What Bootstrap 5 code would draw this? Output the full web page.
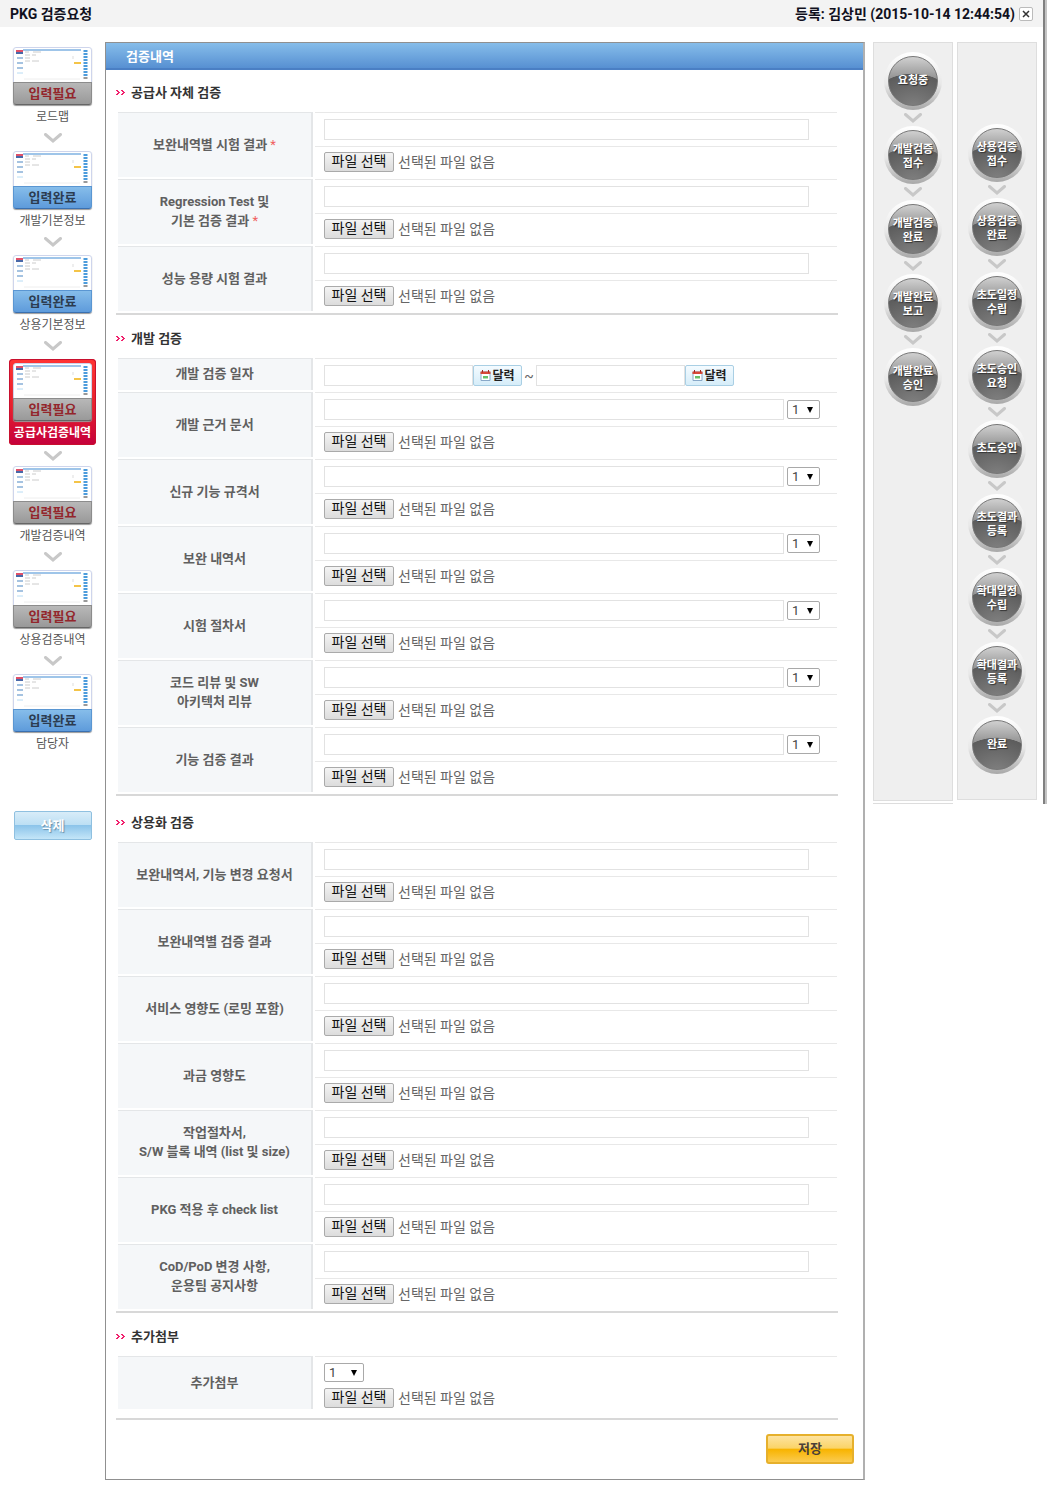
<!DOCTYPE html>
<html lang="ko">
<head>
<meta charset="utf-8">
<meta name="viewport" content="width=device-width, initial-scale=1">
<title>PKG 검증요청</title>
<link href="https://cdn.jsdelivr.net/npm/bootstrap@5.3.0/dist/css/bootstrap.min.css" rel="stylesheet">
<style>
body{font-family:Roboto,"Noto Sans CJK KR",sans-serif;font-size:14px;line-height:18px;color:#666;background:#fff}
.edge{padding-right:10px;background:linear-gradient(90deg,#808080 50%,#c4c4c4 50%) right/4px 100% no-repeat}
.top-strip{background-color:#f3f3f3;height:27px;padding-left:10px;color:#101020;font-size:14px;font-weight:700}
.close-x{width:14px;height:14px;border:1px solid #bbb;border-radius:2px;background:#fff;color:#333}
/* left menu */
.side{width:105px;padding-top:20px}
.side-item{color:#555;font-size:12px;line-height:16px;text-decoration:none}
.shot{width:79px;border-radius:3px;box-shadow:0 1px 1px #999}
.shot svg{display:block}
.state{height:23px;line-height:22px;font-size:13px;font-weight:700;border-radius:0 0 3px 3px;border:1px solid;text-align:center}
.state-need{background:linear-gradient(#b8b8b8,#999);border-color:#8c8c8c;border-bottom-color:#666;color:#93262c}
.state-done{background:linear-gradient(#86bdea,#5e9bdb);border-color:#5a96d2;border-bottom-color:#3a70b0;color:#2c3c50}
.side-item.current{width:87px;padding:4px 0;border-radius:4px;background:linear-gradient(#ff3434,#e8202c 55%,#c4003c);box-shadow:inset 0 0 0 1px #c8102e;color:#fff;font-weight:700}
.arrow{height:26px}
.current + .arrow{height:21px}
.btn-del{width:78px;height:29px;margin-top:59px;border:1px solid #8fc0e0;border-radius:2px;background:linear-gradient(#d8ecf8,#bcdff4 48%,#8cc4ea 50%,#c4e6f8);color:#fff;font-size:13px;font-weight:700;text-shadow:1px 1px 1px #6a8fa8}
/* panel */
.panel{margin-top:15px;border:1px solid #909090;border-right:2px solid #b0b0b0}
.panel-head{height:27px;line-height:27px;padding-left:20px;font-size:13px;font-weight:700;color:#fff;background:linear-gradient(#86bdea,#5790d2);border-bottom:2px solid #4a7fc4}
.group{padding:0 25px 0 10px}
.group-title{height:18px;margin:15px 0 10px;font-size:13px;line-height:18px;font-weight:700;color:#333}
.group:first-of-type .group-title{margin-top:14px}
.group-spaced .group-title{margin-top:18px}
.rows{padding:0 1px 0 2px;border-bottom:2px solid #d8d8d8}
.item{gap:2px}
.item-label{width:195px;margin-bottom:2px;padding-bottom:2px;background:#f5f7f9;border-top:1px solid #e4e6e8;border-right:2px solid #e4e6e8;font-size:13px;line-height:19px;font-weight:700;color:#606060;text-align:center}
.req{color:#f06060;font-weight:400}
.line{height:34px;padding:0 28px 0 9px;border-top:1px solid #e8e8e8}
.line + .line{height:33px;padding-bottom:2px}
.line.has-count{padding-right:17px;gap:3px}
.box{height:21px;border:1px solid #e2e2e2;border-radius:0;padding:0 4px;background:#fff;font-size:13px;min-width:0}
.box-date{width:149px}
.btn-file{width:70px;height:20px;padding:0 0 2px;border:1px solid #aaa;border-radius:2px;background:linear-gradient(#f4f4f4,#dcdcdc);color:#111;font-size:14px;line-height:16px}
.file{gap:4px}
.count{width:33px;height:19px;padding:0 0 0 4px;border:1px solid #a9a9a9;border-radius:2px;font-size:13px;line-height:16px;color:#444;appearance:none;background:#fff url("data:image/svg+xml,%3Csvg xmlns='http://www.w3.org/2000/svg' width='6' height='6'%3E%3Cpath d='M0 0h6L3 6z'/%3E%3C/svg%3E") right 6px center no-repeat}
.count-wide{width:40px}
.btn-cal{width:49px;height:21px;padding:0;border:1px solid #a9cfe4;border-radius:2px;background:linear-gradient(#f4fbff,#d6edf9);color:#222;font-size:12px;line-height:18px;font-weight:700;gap:1px}
.tilde{width:14px;text-align:center}
.extra .item-label{height:53px;margin-bottom:9px}
.extra-body{padding:6px 9px 0;border-top:1px solid #e8e8e8;gap:6px}
.btn-save{width:88px;height:30px;margin:14px 9px 15px;border:2px solid #e6b02c;border-radius:3px;background:linear-gradient(#fde3a0,#fbd468 46%,#f8b400 52%,#fbcb50);color:#4a4038;font-size:13px;font-weight:700;line-height:24px}
/* progress */
.steps{margin-left:8px;padding-top:15px}
.track{width:80px;background:#efefef;border:1px solid #dedede;padding:9px 0 25px}
.track-late{padding-top:81px}
.under{border-top:1px solid #ddd;margin-top:2px}
.orb{width:58px;height:58px;padding:4px;border-radius:50%;background:linear-gradient(#fff,#e8e8e8 55%,#a8a8a8)}
.orb-face{height:50px;padding-top:3px;border:1px solid #777;border-radius:50%;background:radial-gradient(45px 34px at 50% 105%,#808080,#5c5c5c 98%,transparent 100%),linear-gradient(#d0d0d0,#8c8c8c 50%);color:#fff;font-size:11px;line-height:14px;font-weight:700;text-align:center;text-shadow:1px 1px 1px #333;white-space:nowrap}
.gap-mark{height:16px}
</style>
<script src="https://cdn.jsdelivr.net/npm/bootstrap@5.3.0/dist/js/bootstrap.bundle.min.js"></script>
</head>
<body>
<svg width="0" height="0" class="d-none" aria-hidden="true">
  <symbol id="shot" viewBox="0 0 79 35">
    <path d="M.5 35V3Q.5.5 3 .5H76Q78.500.5 78.500 3V35" fill="#fff" stroke="#ced5ec"/>
    <path d="M10 3h58" stroke="#7fb2e2" stroke-width="1.500"/>
    <path d="M3 3h7v2H3z" fill="#e05068"/><path d="M3 5h7v2H3z" fill="#4868a8"/>
    <path d="M4 11h6M4 16h6M4 21h6" stroke="#88b0d8" stroke-width="1.500"/><path d="M4 26h6" stroke="#b8dcf4"/>
    <path d="M12 5h4M12 8h5M12 11h5M12 14h5M19 8h4M20 5h8M19 14h7" stroke="#ccc"/>
    <path d="M60 9v3" stroke="#ddd"/><path d="M61 16h7" stroke="#f4c448" stroke-width="2"/>
    <path d="M11 32h56" stroke="#eee"/>
    <path d="M72.500 3v26" stroke="#4c9cdc" stroke-width="4" stroke-dasharray="2 1"/><path d="M70.500 31h4" stroke="#777" stroke-width="1.500"/>
  </symbol>
  <symbol id="chev" viewBox="0 0 18 10"><path d="M1.500 1.500 9 8l7.500-6.500" fill="none" stroke="#c8c8c8" stroke-width="3" stroke-linecap="round"/></symbol>
  <symbol id="dots" viewBox="0 0 11 6"><path d="M0 0h2v1H0zM2 1h1v1H2zM3 2h1v1H3zM2 3h1v1H2zM0 4h2v1H0zM5 0h2v1H5zM7 1h1v1H7zM8 2h1v1H8zM7 3h1v1H7zM5 4h2v1H5zM1 1h1v1H1zM2 2h1v1H2zM1 3h1v1H1zM6 1h1v1H6zM7 2h1v1H7zM6 3h1v1H6z" fill="#f0206c"/></symbol>
  <symbol id="cal" viewBox="0 0 11 11"><path d="M1 2h9v8.500H1z" fill="#fff" stroke="#88a8c8"/><path d="M.5 1.500h10v2.500H.5z" fill="#d84838"/><path d="M2.500 0v2.500M8.500 0v2.500" stroke="#a02820"/><path d="M3 6h5v2.500H3z" fill="#68c068"/></symbol>
</svg>

<header class="top-strip edge d-flex align-items-center justify-content-between">
  <span>PKG 검증요청</span>
  <span class="d-flex align-items-center gap-1 me-1"><span>등록: 김상민 (2015-10-14 12:44:54)</span>
    <button type="button" class="close-x p-0 d-flex align-items-center justify-content-center" aria-label="닫기"><svg width="8" height="8" viewBox="0 0 8 8"><path d="M1 1l6 6M7 1L1 7" stroke="currentColor" stroke-width="1.500"/></svg></button></span>
</header>

<div class="d-flex align-items-start">
  <nav class="side flex-shrink-0 d-flex flex-column align-items-center">
    <a href="#" class="side-item d-flex flex-column align-items-center gap-1"><span class="shot"><svg width="79" height="35"><use href="#shot"/></svg><span class="state state-need d-block">입력필요</span></span><span>로드맵</span></a>
    <span class="arrow d-flex align-items-center"><svg width="18" height="10"><use href="#chev"/></svg></span>
    <a href="#" class="side-item d-flex flex-column align-items-center gap-1"><span class="shot"><svg width="79" height="35"><use href="#shot"/></svg><span class="state state-done d-block">입력완료</span></span><span>개발기본정보</span></a>
    <span class="arrow d-flex align-items-center"><svg width="18" height="10"><use href="#chev"/></svg></span>
    <a href="#" class="side-item d-flex flex-column align-items-center gap-1"><span class="shot"><svg width="79" height="35"><use href="#shot"/></svg><span class="state state-done d-block">입력완료</span></span><span>상용기본정보</span></a>
    <span class="arrow d-flex align-items-center"><svg width="18" height="10"><use href="#chev"/></svg></span>
    <a href="#" class="side-item current d-flex flex-column align-items-center gap-1" aria-current="page"><span class="shot"><svg width="79" height="35"><use href="#shot"/></svg><span class="state state-need d-block">입력필요</span></span><span>공급사검증내역</span></a>
    <span class="arrow d-flex align-items-center"><svg width="18" height="10"><use href="#chev"/></svg></span>
    <a href="#" class="side-item d-flex flex-column align-items-center gap-1"><span class="shot"><svg width="79" height="35"><use href="#shot"/></svg><span class="state state-need d-block">입력필요</span></span><span>개발검증내역</span></a>
    <span class="arrow d-flex align-items-center"><svg width="18" height="10"><use href="#chev"/></svg></span>
    <a href="#" class="side-item d-flex flex-column align-items-center gap-1"><span class="shot"><svg width="79" height="35"><use href="#shot"/></svg><span class="state state-need d-block">입력필요</span></span><span>상용검증내역</span></a>
    <span class="arrow d-flex align-items-center"><svg width="18" height="10"><use href="#chev"/></svg></span>
    <a href="#" class="side-item d-flex flex-column align-items-center gap-1"><span class="shot"><svg width="79" height="35"><use href="#shot"/></svg><span class="state state-done d-block">입력완료</span></span><span>담당자</span></a>
    <button type="button" class="btn-del p-0">삭제</button>
  </nav>

  <form class="panel flex-grow-1">
    <div class="panel-head">검증내역</div>

    <section class="group">
      <h2 class="group-title d-flex align-items-center gap-1"><svg width="11" height="6"><use href="#dots"/></svg>공급사 자체 검증</h2>
      <div class="rows">
        <div class="item d-flex"><label id="l1" for="t1" class="item-label d-flex align-items-center justify-content-center"><span>보완내역별 시험 결과 <span class="req">*</span></span></label>
          <div class="flex-grow-1"><div class="line d-flex align-items-center"><input id="t1" type="text" class="box flex-grow-1"></div>
          <div class="line file d-flex align-items-center"><input type="file" hidden aria-labelledby="l1"><button type="button" class="btn-file">파일 선택</button><span>선택된 파일 없음</span></div></div></div>
        <div class="item d-flex"><label id="l2" for="t2" class="item-label d-flex align-items-center justify-content-center"><span>Regression Test 및<br>기본 검증 결과 <span class="req">*</span></span></label>
          <div class="flex-grow-1"><div class="line d-flex align-items-center"><input id="t2" type="text" class="box flex-grow-1"></div>
          <div class="line file d-flex align-items-center"><input type="file" hidden aria-labelledby="l2"><button type="button" class="btn-file">파일 선택</button><span>선택된 파일 없음</span></div></div></div>
        <div class="item d-flex"><label id="l3" for="t3" class="item-label d-flex align-items-center justify-content-center">성능 용량 시험 결과</label>
          <div class="flex-grow-1"><div class="line d-flex align-items-center"><input id="t3" type="text" class="box flex-grow-1"></div>
          <div class="line file d-flex align-items-center"><input type="file" hidden aria-labelledby="l3"><button type="button" class="btn-file">파일 선택</button><span>선택된 파일 없음</span></div></div></div>
      </div>
    </section>

    <section class="group">
      <h2 class="group-title d-flex align-items-center gap-1"><svg width="11" height="6"><use href="#dots"/></svg>개발 검증</h2>
      <div class="rows">
        <div class="item d-flex"><label id="l4" for="t4" class="item-label d-flex align-items-center justify-content-center">개발 검증 일자</label>
          <div class="flex-grow-1"><div class="line d-flex align-items-center"><input id="t4" type="text" class="box box-date"><button type="button" class="btn-cal d-flex align-items-center justify-content-center"><svg width="11" height="11"><use href="#cal"/></svg>달력</button><span class="tilde">~</span><input type="text" class="box box-date" aria-labelledby="l4"><button type="button" class="btn-cal d-flex align-items-center justify-content-center"><svg width="11" height="11"><use href="#cal"/></svg>달력</button></div></div></div>
        <div class="item d-flex"><label id="l5" for="t5" class="item-label d-flex align-items-center justify-content-center">개발 근거 문서</label>
          <div class="flex-grow-1"><div class="line has-count d-flex align-items-center"><input id="t5" type="text" class="box flex-grow-1"><select class="count" aria-labelledby="l5"><option>1</option></select></div>
          <div class="line file d-flex align-items-center"><input type="file" hidden aria-labelledby="l5"><button type="button" class="btn-file">파일 선택</button><span>선택된 파일 없음</span></div></div></div>
        <div class="item d-flex"><label id="l6" for="t6" class="item-label d-flex align-items-center justify-content-center">신규 기능 규격서</label>
          <div class="flex-grow-1"><div class="line has-count d-flex align-items-center"><input id="t6" type="text" class="box flex-grow-1"><select class="count" aria-labelledby="l6"><option>1</option></select></div>
          <div class="line file d-flex align-items-center"><input type="file" hidden aria-labelledby="l6"><button type="button" class="btn-file">파일 선택</button><span>선택된 파일 없음</span></div></div></div>
        <div class="item d-flex"><label id="l7" for="t7" class="item-label d-flex align-items-center justify-content-center">보완 내역서</label>
          <div class="flex-grow-1"><div class="line has-count d-flex align-items-center"><input id="t7" type="text" class="box flex-grow-1"><select class="count" aria-labelledby="l7"><option>1</option></select></div>
          <div class="line file d-flex align-items-center"><input type="file" hidden aria-labelledby="l7"><button type="button" class="btn-file">파일 선택</button><span>선택된 파일 없음</span></div></div></div>
        <div class="item d-flex"><label id="l8" for="t8" class="item-label d-flex align-items-center justify-content-center">시험 절차서</label>
          <div class="flex-grow-1"><div class="line has-count d-flex align-items-center"><input id="t8" type="text" class="box flex-grow-1"><select class="count" aria-labelledby="l8"><option>1</option></select></div>
          <div class="line file d-flex align-items-center"><input type="file" hidden aria-labelledby="l8"><button type="button" class="btn-file">파일 선택</button><span>선택된 파일 없음</span></div></div></div>
        <div class="item d-flex"><label id="l9" for="t9" class="item-label d-flex align-items-center justify-content-center">코드 리뷰 및 SW<br>아키텍처 리뷰</label>
          <div class="flex-grow-1"><div class="line has-count d-flex align-items-center"><input id="t9" type="text" class="box flex-grow-1"><select class="count" aria-labelledby="l9"><option>1</option></select></div>
          <div class="line file d-flex align-items-center"><input type="file" hidden aria-labelledby="l9"><button type="button" class="btn-file">파일 선택</button><span>선택된 파일 없음</span></div></div></div>
        <div class="item d-flex"><label id="l10" for="t10" class="item-label d-flex align-items-center justify-content-center">기능 검증 결과</label>
          <div class="flex-grow-1"><div class="line has-count d-flex align-items-center"><input id="t10" type="text" class="box flex-grow-1"><select class="count" aria-labelledby="l10"><option>1</option></select></div>
          <div class="line file d-flex align-items-center"><input type="file" hidden aria-labelledby="l10"><button type="button" class="btn-file">파일 선택</button><span>선택된 파일 없음</span></div></div></div>
      </div>
    </section>

    <section class="group group-spaced">
      <h2 class="group-title d-flex align-items-center gap-1"><svg width="11" height="6"><use href="#dots"/></svg>상용화 검증</h2>
      <div class="rows">
        <div class="item d-flex"><label id="l11" for="t11" class="item-label d-flex align-items-center justify-content-center">보완내역서, 기능 변경 요청서</label>
          <div class="flex-grow-1"><div class="line d-flex align-items-center"><input id="t11" type="text" class="box flex-grow-1"></div>
          <div class="line file d-flex align-items-center"><input type="file" hidden aria-labelledby="l11"><button type="button" class="btn-file">파일 선택</button><span>선택된 파일 없음</span></div></div></div>
        <div class="item d-flex"><label id="l12" for="t12" class="item-label d-flex align-items-center justify-content-center">보완내역별 검증 결과</label>
          <div class="flex-grow-1"><div class="line d-flex align-items-center"><input id="t12" type="text" class="box flex-grow-1"></div>
          <div class="line file d-flex align-items-center"><input type="file" hidden aria-labelledby="l12"><button type="button" class="btn-file">파일 선택</button><span>선택된 파일 없음</span></div></div></div>
        <div class="item d-flex"><label id="l13" for="t13" class="item-label d-flex align-items-center justify-content-center">서비스 영향도 (로밍 포함)</label>
          <div class="flex-grow-1"><div class="line d-flex align-items-center"><input id="t13" type="text" class="box flex-grow-1"></div>
          <div class="line file d-flex align-items-center"><input type="file" hidden aria-labelledby="l13"><button type="button" class="btn-file">파일 선택</button><span>선택된 파일 없음</span></div></div></div>
        <div class="item d-flex"><label id="l14" for="t14" class="item-label d-flex align-items-center justify-content-center">과금 영향도</label>
          <div class="flex-grow-1"><div class="line d-flex align-items-center"><input id="t14" type="text" class="box flex-grow-1"></div>
          <div class="line file d-flex align-items-center"><input type="file" hidden aria-labelledby="l14"><button type="button" class="btn-file">파일 선택</button><span>선택된 파일 없음</span></div></div></div>
        <div class="item d-flex"><label id="l15" for="t15" class="item-label d-flex align-items-center justify-content-center">작업절차서,<br>S/W 블록 내역 (list 및 size)</label>
          <div class="flex-grow-1"><div class="line d-flex align-items-center"><input id="t15" type="text" class="box flex-grow-1"></div>
          <div class="line file d-flex align-items-center"><input type="file" hidden aria-labelledby="l15"><button type="button" class="btn-file">파일 선택</button><span>선택된 파일 없음</span></div></div></div>
        <div class="item d-flex"><label id="l16" for="t16" class="item-label d-flex align-items-center justify-content-center">PKG 적용 후 check list</label>
          <div class="flex-grow-1"><div class="line d-flex align-items-center"><input id="t16" type="text" class="box flex-grow-1"></div>
          <div class="line file d-flex align-items-center"><input type="file" hidden aria-labelledby="l16"><button type="button" class="btn-file">파일 선택</button><span>선택된 파일 없음</span></div></div></div>
        <div class="item d-flex"><label id="l17" for="t17" class="item-label d-flex align-items-center justify-content-center">CoD/PoD 변경 사항,<br>운용팀 공지사항</label>
          <div class="flex-grow-1"><div class="line d-flex align-items-center"><input id="t17" type="text" class="box flex-grow-1"></div>
          <div class="line file d-flex align-items-center"><input type="file" hidden aria-labelledby="l17"><button type="button" class="btn-file">파일 선택</button><span>선택된 파일 없음</span></div></div></div>
      </div>
    </section>

    <section class="group">
      <h2 class="group-title d-flex align-items-center gap-1"><svg width="11" height="6"><use href="#dots"/></svg>추가첨부</h2>
      <div class="rows">
        <div class="item extra d-flex"><label id="l18" for="t18" class="item-label d-flex align-items-center justify-content-center">추가첨부</label>
          <div class="extra-body flex-grow-1 d-flex flex-column"><select id="t18" class="count count-wide"><option>1</option></select>
          <div class="file d-flex align-items-center"><input type="file" hidden aria-labelledby="l18"><button type="button" class="btn-file">파일 선택</button><span>선택된 파일 없음</span></div></div></div>
      </div>
    </section>
    <div class="d-flex justify-content-end"><button type="submit" class="btn-save p-0">저장</button></div>
  </form>

  <aside class="steps edge flex-shrink-0 d-flex">
    <div class="d-flex flex-column me-1">
      <div class="track flex-grow-1 d-flex flex-column align-items-center">
        <div class="orb"><div class="orb-face pt-0 d-flex align-items-center justify-content-center">요청중</div></div>
        <span class="gap-mark d-flex align-items-center"><svg width="18" height="10"><use href="#chev"/></svg></span>
        <div class="orb"><div class="orb-face d-flex align-items-center justify-content-center">개발검증<br>접수</div></div>
        <span class="gap-mark d-flex align-items-center"><svg width="18" height="10"><use href="#chev"/></svg></span>
        <div class="orb"><div class="orb-face d-flex align-items-center justify-content-center">개발검증<br>완료</div></div>
        <span class="gap-mark d-flex align-items-center"><svg width="18" height="10"><use href="#chev"/></svg></span>
        <div class="orb"><div class="orb-face d-flex align-items-center justify-content-center">개발완료<br>보고</div></div>
        <span class="gap-mark d-flex align-items-center"><svg width="18" height="10"><use href="#chev"/></svg></span>
        <div class="orb"><div class="orb-face d-flex align-items-center justify-content-center">개발완료<br>승인</div></div>
      </div>
      <div class="under"></div>
    </div>
    <div class="d-flex flex-column pb-1">
      <div class="track track-late d-flex flex-column align-items-center">
        <div class="orb"><div class="orb-face d-flex align-items-center justify-content-center">상용검증<br>접수</div></div>
        <span class="gap-mark d-flex align-items-center"><svg width="18" height="10"><use href="#chev"/></svg></span>
        <div class="orb"><div class="orb-face d-flex align-items-center justify-content-center">상용검증<br>완료</div></div>
        <span class="gap-mark d-flex align-items-center"><svg width="18" height="10"><use href="#chev"/></svg></span>
        <div class="orb"><div class="orb-face d-flex align-items-center justify-content-center">초도일정<br>수립</div></div>
        <span class="gap-mark d-flex align-items-center"><svg width="18" height="10"><use href="#chev"/></svg></span>
        <div class="orb"><div class="orb-face d-flex align-items-center justify-content-center">초도승인<br>요청</div></div>
        <span class="gap-mark d-flex align-items-center"><svg width="18" height="10"><use href="#chev"/></svg></span>
        <div class="orb"><div class="orb-face pt-0 d-flex align-items-center justify-content-center">초도승인</div></div>
        <span class="gap-mark d-flex align-items-center"><svg width="18" height="10"><use href="#chev"/></svg></span>
        <div class="orb"><div class="orb-face d-flex align-items-center justify-content-center">초도결과<br>등록</div></div>
        <span class="gap-mark d-flex align-items-center"><svg width="18" height="10"><use href="#chev"/></svg></span>
        <div class="orb"><div class="orb-face d-flex align-items-center justify-content-center">확대일정<br>수립</div></div>
        <span class="gap-mark d-flex align-items-center"><svg width="18" height="10"><use href="#chev"/></svg></span>
        <div class="orb"><div class="orb-face d-flex align-items-center justify-content-center">확대결과<br>등록</div></div>
        <span class="gap-mark d-flex align-items-center"><svg width="18" height="10"><use href="#chev"/></svg></span>
        <div class="orb"><div class="orb-face pt-0 d-flex align-items-center justify-content-center">완료</div></div>
      </div>
    </div>
  </aside>
</div>
<script>
document.querySelectorAll('.btn-file').forEach(function (b) {
  var input = b.previousElementSibling;
  b.addEventListener('click', function () { input.click(); });
  input.addEventListener('change', function () { b.nextElementSibling.textContent = input.files.length ? input.files[0].name : '선택된 파일 없음'; });
});
</script>
</body>
</html>
